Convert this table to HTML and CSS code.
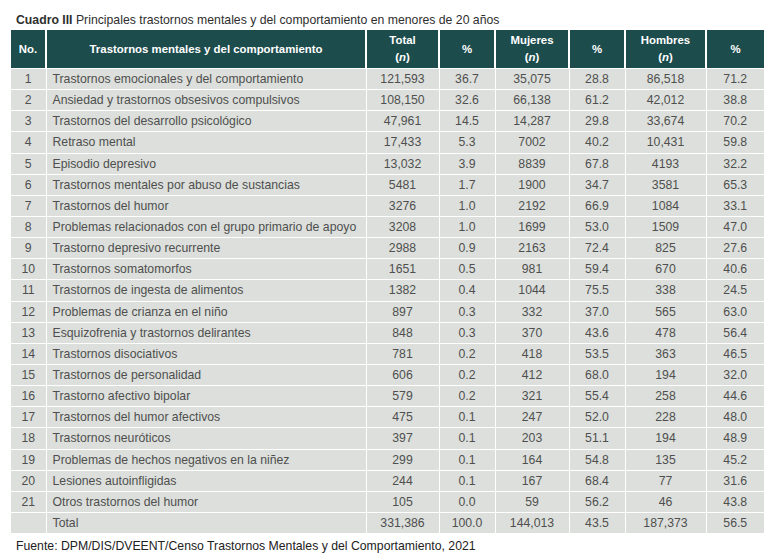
FILE: index.html
```html
<!DOCTYPE html>
<html lang="es">
<head>
<meta charset="utf-8">
<title>Cuadro III</title>
<link rel="stylesheet" href="styles.css">
</head>
<body>
<div class="page">
  <p class="title"><span class="label">Cuadro III</span> Principales trastornos mentales y del comportamiento en menores de 20 años</p>
  <table class="data">
    <colgroup>
      <col class="c-no"><col class="c-name"><col class="c-tot"><col class="c-p1"><col class="c-muj"><col class="c-p2"><col class="c-hom"><col class="c-p3">
    </colgroup>
    <thead>
      <tr>
        <th>No.</th>
        <th>Trastornos mentales y del comportamiento</th>
        <th>Total<br>(<i>n</i>)</th>
        <th>%</th>
        <th>Mujeres<br>(<i>n</i>)</th>
        <th>%</th>
        <th>Hombres<br>(<i>n</i>)</th>
        <th>%</th>
      </tr>
    </thead>
    <tbody>
      <tr><td>1</td><td class="name">Trastornos emocionales y del comportamiento</td><td>121,593</td><td>36.7</td><td>35,075</td><td>28.8</td><td>86,518</td><td>71.2</td></tr>
      <tr><td>2</td><td class="name">Ansiedad y trastornos obsesivos compulsivos</td><td>108,150</td><td>32.6</td><td>66,138</td><td>61.2</td><td>42,012</td><td>38.8</td></tr>
      <tr><td>3</td><td class="name">Trastornos del desarrollo psicológico</td><td>47,961</td><td>14.5</td><td>14,287</td><td>29.8</td><td>33,674</td><td>70.2</td></tr>
      <tr><td>4</td><td class="name">Retraso mental</td><td>17,433</td><td>5.3</td><td>7002</td><td>40.2</td><td>10,431</td><td>59.8</td></tr>
      <tr><td>5</td><td class="name">Episodio depresivo</td><td>13,032</td><td>3.9</td><td>8839</td><td>67.8</td><td>4193</td><td>32.2</td></tr>
      <tr><td>6</td><td class="name">Trastornos mentales por abuso de sustancias</td><td>5481</td><td>1.7</td><td>1900</td><td>34.7</td><td>3581</td><td>65.3</td></tr>
      <tr><td>7</td><td class="name">Trastornos del humor</td><td>3276</td><td>1.0</td><td>2192</td><td>66.9</td><td>1084</td><td>33.1</td></tr>
      <tr><td>8</td><td class="name">Problemas relacionados con el grupo primario de apoyo</td><td>3208</td><td>1.0</td><td>1699</td><td>53.0</td><td>1509</td><td>47.0</td></tr>
      <tr><td>9</td><td class="name">Trastorno depresivo recurrente</td><td>2988</td><td>0.9</td><td>2163</td><td>72.4</td><td>825</td><td>27.6</td></tr>
      <tr><td>10</td><td class="name">Trastornos somatomorfos</td><td>1651</td><td>0.5</td><td>981</td><td>59.4</td><td>670</td><td>40.6</td></tr>
      <tr><td>11</td><td class="name">Trastornos de ingesta de alimentos</td><td>1382</td><td>0.4</td><td>1044</td><td>75.5</td><td>338</td><td>24.5</td></tr>
      <tr><td>12</td><td class="name">Problemas de crianza en el niño</td><td>897</td><td>0.3</td><td>332</td><td>37.0</td><td>565</td><td>63.0</td></tr>
      <tr><td>13</td><td class="name">Esquizofrenia y trastornos delirantes</td><td>848</td><td>0.3</td><td>370</td><td>43.6</td><td>478</td><td>56.4</td></tr>
      <tr><td>14</td><td class="name">Trastornos disociativos</td><td>781</td><td>0.2</td><td>418</td><td>53.5</td><td>363</td><td>46.5</td></tr>
      <tr><td>15</td><td class="name">Trastornos de personalidad</td><td>606</td><td>0.2</td><td>412</td><td>68.0</td><td>194</td><td>32.0</td></tr>
      <tr><td>16</td><td class="name">Trastorno afectivo bipolar</td><td>579</td><td>0.2</td><td>321</td><td>55.4</td><td>258</td><td>44.6</td></tr>
      <tr><td>17</td><td class="name">Trastornos del humor afectivos</td><td>475</td><td>0.1</td><td>247</td><td>52.0</td><td>228</td><td>48.0</td></tr>
      <tr><td>18</td><td class="name">Trastornos neuróticos</td><td>397</td><td>0.1</td><td>203</td><td>51.1</td><td>194</td><td>48.9</td></tr>
      <tr><td>19</td><td class="name">Problemas de hechos negativos en la niñez</td><td>299</td><td>0.1</td><td>164</td><td>54.8</td><td>135</td><td>45.2</td></tr>
      <tr><td>20</td><td class="name">Lesiones autoinfligidas</td><td>244</td><td>0.1</td><td>167</td><td>68.4</td><td>77</td><td>31.6</td></tr>
      <tr><td>21</td><td class="name">Otros trastornos del humor</td><td>105</td><td>0.0</td><td>59</td><td>56.2</td><td>46</td><td>43.8</td></tr>
      <tr><td></td><td class="name">Total</td><td>331,386</td><td>100.0</td><td>144,013</td><td>43.5</td><td>187,373</td><td>56.5</td></tr>
    </tbody>
  </table>
  <p class="source">Fuente: DPM/DIS/DVEENT/Censo Trastornos Mentales y del Comportamiento, 2021</p>
</div>
</body>
</html>
```

FILE: styles.css
```css
html, body {
  margin: 0;
  padding: 0;
  background: #ffffff;
}

.page {
  padding: 12px 12px 0 11px;
  font-family: "Liberation Sans", Arial, sans-serif;
  font-size: 12.25px;
  color: #333333;
}

.title {
  margin: 0 0 2px 0;
  padding-left: 5px;
  line-height: 16px;
  color: #2e2e2e;
}

.title .label {
  font-weight: bold;
}

.data {
  width: 753px;
  table-layout: fixed;
  border-collapse: collapse;
}

.c-no { width: 35px; }
.c-name { width: 320px; }
.c-tot { width: 73px; }
.c-p1 { width: 56px; }
.c-muj { width: 74px; }
.c-p2 { width: 56px; }
.c-hom { width: 81px; }
.c-p3 { width: 58px; }

.data th {
  background: #1d4c4d;
  color: #ffffff;
  font-weight: bold;
  font-size: 11.4px;
  line-height: 17px;
  height: 38px;
  padding: 0;
  text-align: center;
  border-left: 2px solid #ffffff;
  border-top: 0;
}

.data th:first-child {
  border-left: 0;
}

.data td {
  background: #dcdfdb;
  color: #4f4f4f;
  font-size: 12.25px;
  line-height: 14px;
  height: 20.15px;
  padding: 0;
  text-align: center;
  border: 1px solid #ffffff;
}

.data tr td:first-child {
  border-left: 0;
}

.data tr td:last-child {
  border-right: 0;
}

.data tbody tr:last-child td {
  border-bottom: 0;
}

.data td.name {
  text-align: left;
  padding-left: 6px;
}

.source {
  margin: 5px 0 0 0;
  padding-left: 5px;
  line-height: 16px;
  color: #222222;
}
```
